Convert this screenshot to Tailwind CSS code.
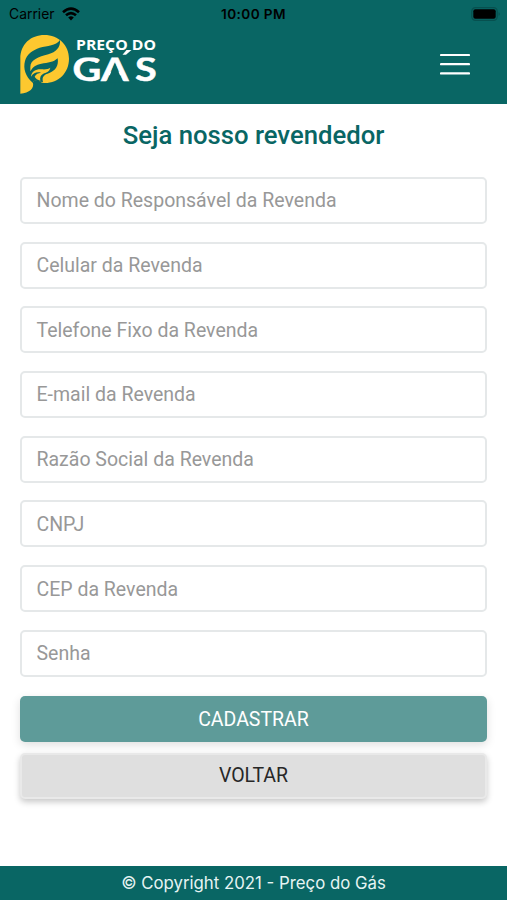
<!DOCTYPE html>
<html lang="pt-BR">
<head>
<meta charset="utf-8">
<title>Preço do Gás</title>
<script src="https://cdn.jsdelivr.net/npm/@tailwindcss/browser@4"></script>
</head>
<body class="h-[900px] w-[507px] overflow-hidden bg-white font-['Roboto',sans-serif]">
<div class="flex h-full flex-col">
  <header class="h-[103.5px] shrink-0 bg-[#096664]">
    <div class="grid h-7 grid-cols-3 items-center px-[9px] font-['Inter',sans-serif] text-black">
      <div class="flex items-center gap-[7px] text-[13.9px]"><span>Carrier</span>
        <svg width="18" height="14" viewBox="0 0 18 14" fill="none" stroke="#000" stroke-width="2.6"><path d="M1 5.2Q9-2 17 5.2M4 8.3Q9 3.8 14 8.3"/><path d="M6.2 10.5Q9 8 11.8 10.5L9 13.5Z" fill="#000" stroke="none"/></svg>
      </div>
      <div class="text-center text-[13.6px] font-semibold tracking-[0.4px]">10:00 PM</div>
      <svg class="-mr-[3px] justify-self-end" width="30" height="14" viewBox="0 0 30 14"><rect x=".8" y=".7" width="25.4" height="12.6" rx="3.6" fill="none" stroke="#07504f" stroke-width="1.2"/><rect x="2.3" y="2.2" width="22.4" height="9.6" rx="2" fill="#000"/><path d="M27.6 5Q30 7 27.6 9Z" fill="#07504f"/></svg>
    </div>
    <div class="flex h-[72px] items-center justify-between pr-[37px]">
      <svg width="170" height="72" viewBox="0 0 170 72">
        <defs><clipPath id="caps"><rect x="70" y="29.6" width="90" height="26"/></clipPath></defs>
        <g transform="scale(.33333)">
          <path fill="#fdc82f" d="M61 197V92C61 48 93 21 133 21C176 21 207 52 207 92C207 134 176 165 135 165C130 165 126 164 121 161C113 157 104 155 98 163C105 180 88 196 61 197Z"/>
          <path fill="#096664" d="M180 36C182 58 168 72 145 79C115 87 91 96 91 117V130C98 117 108 110 124 107C144 104 160 103 173 91C177 114 165 129 148 135C132 140 125 146 129 162L119 161C108 157 102 157 98 164C76 146 69 121 75 99C80 79 98 66 119 59C143 53 167 54 180 36Z"/>
          <path fill="#fdc82f" d="M93 146C95 128 110 122 127 124C138 125 146 122 151 119C149 131 137 134 130 137C122 141 119 148 121 158C113 155 107 152 104 146C108 138 115 135 123 134C111 131 102 133 93 146Z"/>
        </g>
        <g fill="#fff">
          <text x="76" y="22.2" font-family="Open Sans,sans-serif" font-weight="700" font-size="14.6" textLength="80" lengthAdjust="spacingAndGlyphs">PREÇO DO</text>
          <g clip-path="url(#caps)"><text transform="translate(72.5 53) scale(1.22 1)" x="0 23.3 51.3" y="0" font-family="Lato,sans-serif" font-weight="700" font-size="32.5" stroke="#fff" stroke-width=".5">GÁS</text></g>
          <path d="M126.5 22H131.5L126 26.7H122.5Z"/>
        </g>
        <path fill="#096664" d="M114.9 35L123 54.5H106.8Z"/>
      </svg>
      <svg width="30" height="24" viewBox="0 0 30 24" stroke="#fff" stroke-width="2.2" stroke-linecap="round"><path d="M1 3H29M1 12.2H29M1 21.4H29"/></svg>
    </div>
  </header>
  <main class="flex flex-1 flex-col px-5">
    <h1 class="mt-[15.5px] h-[58px] text-center text-[25.7px] leading-[33px] font-medium text-[#096664]">Seja nosso revendedor</h1>
    <form class="flex flex-col">
      <div class="flex flex-col gap-[17.7px] text-[19.5px] text-[#989898]">
        <div class="flex h-[47px] items-center rounded-[5px] border-2 border-[#e5e8e9] px-[14.5px] pt-px">Nome do Responsável da Revenda</div>
        <div class="flex h-[47px] items-center rounded-[5px] border-2 border-[#e5e8e9] px-[14.5px] pt-px">Celular da Revenda</div>
        <div class="flex h-[47px] items-center rounded-[5px] border-2 border-[#e5e8e9] px-[14.5px] pt-px">Telefone Fixo da Revenda</div>
        <div class="flex h-[47px] items-center rounded-[5px] border-2 border-[#e5e8e9] px-[14.5px] pt-px">E-mail da Revenda</div>
        <div class="flex h-[47px] items-center rounded-[5px] border-2 border-[#e5e8e9] px-[14.5px] pt-px">Razão Social da Revenda</div>
        <div class="flex h-[47px] items-center rounded-[5px] border-2 border-[#e5e8e9] px-[14.5px] pt-px">CNPJ</div>
        <div class="flex h-[47px] items-center rounded-[5px] border-2 border-[#e5e8e9] px-[14.5px] pt-px">CEP da Revenda</div>
        <div class="flex h-[47px] items-center rounded-[5px] border-2 border-[#e5e8e9] px-[14.5px] pt-px">Senha</div>
      </div>
      <button type="button" class="mt-[19px] h-[46px] rounded-[5px] bg-[#5e9b99] pt-px text-[19.5px] text-white shadow-[0_3px_10px_rgba(0,0,0,0.13)]">CADASTRAR</button>
      <button type="button" class="mt-[11px] h-[46px] rounded-[5px] border-2 border-[#e9e9e9] bg-[#dfdfdf] text-[19.5px] text-[#272727] shadow-[0_3px_6px_rgba(0,0,0,0.22)]">VOLTAR</button>
    </form>
  </main>
  <footer class="flex h-[34.5px] shrink-0 items-center justify-center bg-[#096664] pt-px font-['Inter',sans-serif] text-[16.8px] text-[#e6f4f3]">© Copyright 2021 - Preço do Gás</footer>
</div>
</body>
</html>
